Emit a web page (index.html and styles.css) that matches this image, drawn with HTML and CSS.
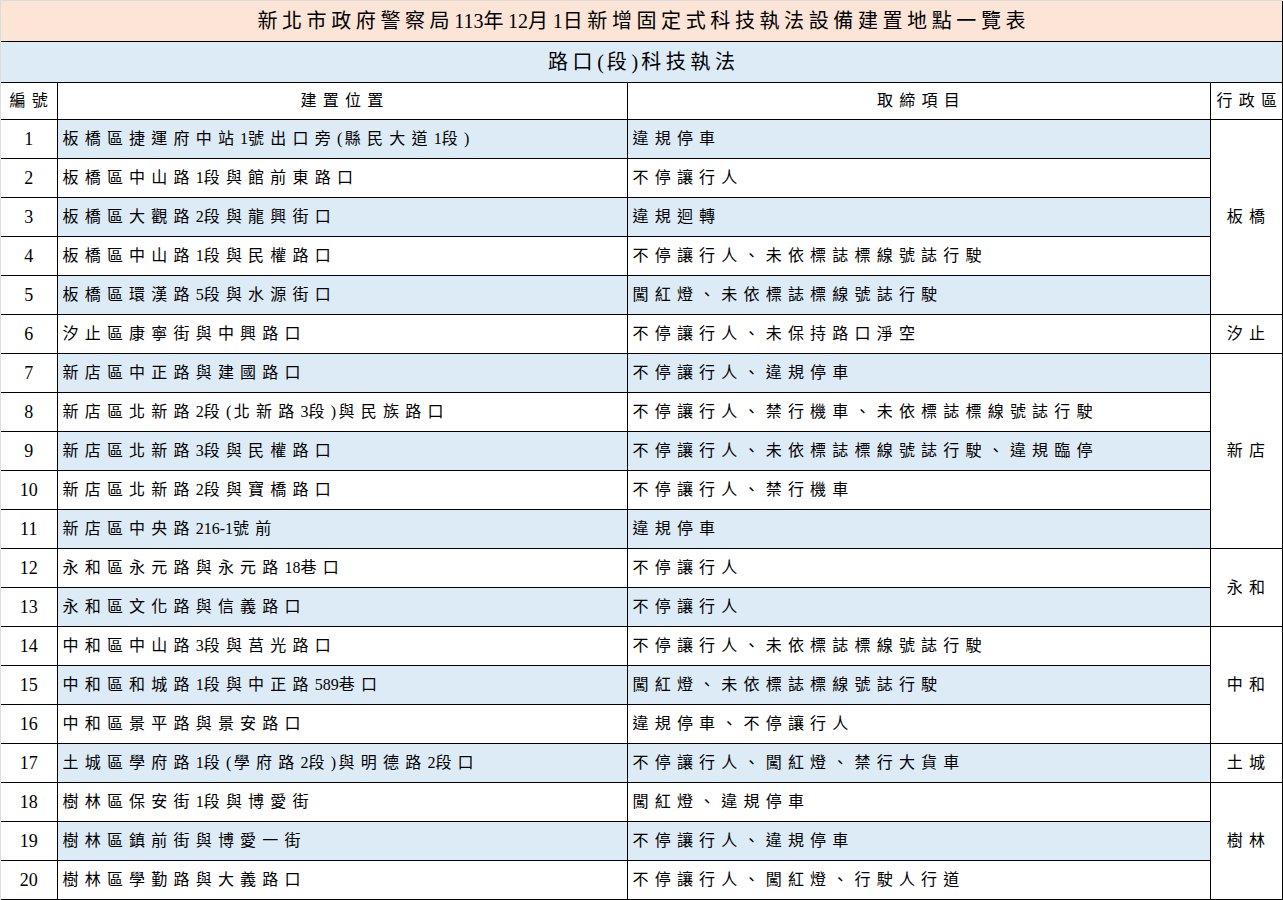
FILE: index.html
```html
<!DOCTYPE html>
<html lang="zh-Hant">
<head>
<meta charset="utf-8">
<title>新北市政府警察局113年12月1日新增固定式科技執法設備建置地點一覽表</title>
<link rel="stylesheet" href="styles.css">
</head>
<body>
<div class="sheet">
<table class="grid">
  <colgroup>
    <col class="c-no"><col class="c-loc"><col class="c-item"><col class="c-dist">
  </colgroup>
  <tr class="r-title"><td colspan="4">新北市政府警察局<span class="d">113</span>年<span class="d">12</span>月<span class="d">1</span>日新增固定式科技執法設備建置地點一覽表</td></tr>
  <tr class="r-sub"><td colspan="4">路口<span class="p">(</span>段<span class="p">)</span>科技執法</td></tr>
  <tr class="r-head">
    <td class="ctr">編號</td>
    <td class="ctr">建置位置</td>
    <td class="ctr">取締項目</td>
    <td class="ctr">行政區</td>
  </tr>
  <tr class="row odd"><td class="no">1</td><td class="txt">板橋區捷運府中站<span class="d">1</span>號出口旁<span class="p">(</span>縣民大道<span class="d">1</span>段<span class="p">)</span></td><td class="txt">違規停車</td><td class="dist" rowspan="5">板橋</td></tr>
  <tr class="row"><td class="no">2</td><td class="txt">板橋區中山路<span class="d">1</span>段與館前東路口</td><td class="txt">不停讓行人</td></tr>
  <tr class="row odd"><td class="no">3</td><td class="txt">板橋區大觀路<span class="d">2</span>段與龍興街口</td><td class="txt">違規迴轉</td></tr>
  <tr class="row"><td class="no">4</td><td class="txt">板橋區中山路<span class="d">1</span>段與民權路口</td><td class="txt">不停讓行人、未依標誌標線號誌行駛</td></tr>
  <tr class="row odd"><td class="no">5</td><td class="txt">板橋區環漢路<span class="d">5</span>段與水源街口</td><td class="txt">闖紅燈、未依標誌標線號誌行駛</td></tr>
  <tr class="row"><td class="no">6</td><td class="txt">汐止區康寧街與中興路口</td><td class="txt">不停讓行人、未保持路口淨空</td><td class="dist">汐止</td></tr>
  <tr class="row odd"><td class="no">7</td><td class="txt">新店區中正路與建國路口</td><td class="txt">不停讓行人、違規停車</td><td class="dist" rowspan="5">新店</td></tr>
  <tr class="row"><td class="no">8</td><td class="txt">新店區北新路<span class="d">2</span>段<span class="p">(</span>北新路<span class="d">3</span>段<span class="p">)</span>與民族路口</td><td class="txt">不停讓行人、禁行機車、未依標誌標線號誌行駛</td></tr>
  <tr class="row odd"><td class="no">9</td><td class="txt">新店區北新路<span class="d">3</span>段與民權路口</td><td class="txt">不停讓行人、未依標誌標線號誌行駛、違規臨停</td></tr>
  <tr class="row"><td class="no">10</td><td class="txt">新店區北新路<span class="d">2</span>段與寶橋路口</td><td class="txt">不停讓行人、禁行機車</td></tr>
  <tr class="row odd"><td class="no">11</td><td class="txt">新店區中央路<span class="d">216-1</span>號前</td><td class="txt">違規停車</td></tr>
  <tr class="row"><td class="no">12</td><td class="txt">永和區永元路與永元路<span class="d">18</span>巷口</td><td class="txt">不停讓行人</td><td class="dist" rowspan="2">永和</td></tr>
  <tr class="row odd"><td class="no">13</td><td class="txt">永和區文化路與信義路口</td><td class="txt">不停讓行人</td></tr>
  <tr class="row"><td class="no">14</td><td class="txt">中和區中山路<span class="d">3</span>段與莒光路口</td><td class="txt">不停讓行人、未依標誌標線號誌行駛</td><td class="dist" rowspan="3">中和</td></tr>
  <tr class="row odd"><td class="no">15</td><td class="txt">中和區和城路<span class="d">1</span>段與中正路<span class="d">589</span>巷口</td><td class="txt">闖紅燈、未依標誌標線號誌行駛</td></tr>
  <tr class="row"><td class="no">16</td><td class="txt">中和區景平路與景安路口</td><td class="txt">違規停車、不停讓行人</td></tr>
  <tr class="row odd"><td class="no">17</td><td class="txt">土城區學府路<span class="d">1</span>段<span class="p">(</span>學府路<span class="d">2</span>段<span class="p">)</span>與明德路<span class="d">2</span>段口</td><td class="txt">不停讓行人、闖紅燈、禁行大貨車</td><td class="dist">土城</td></tr>
  <tr class="row"><td class="no">18</td><td class="txt">樹林區保安街<span class="d">1</span>段與博愛街</td><td class="txt">闖紅燈、違規停車</td><td class="dist" rowspan="3">樹林</td></tr>
  <tr class="row odd"><td class="no">19</td><td class="txt">樹林區鎮前街與博愛一街</td><td class="txt">不停讓行人、違規停車</td></tr>
  <tr class="row"><td class="no">20</td><td class="txt">樹林區學勤路與大義路口</td><td class="txt">不停讓行人、闖紅燈、行駛人行道</td></tr>
</table>
</div>
</body>
</html>
```

FILE: styles.css
```css
html, body {
  margin: 0;
  padding: 0;
  background: #dcdcdc;
}

.sheet {
  padding: 1px 0 0 1px;
}

.grid {
  border-collapse: collapse;
  table-layout: fixed;
  width: 1281px;
  background: #ffffff;
  color: #000000;
  font-family: "Liberation Serif", "Noto Sans CJK TC", serif;
  font-size: 16px;
  letter-spacing: 6.2px;
}

.c-no { width: 56px; }
.c-loc { width: 570px; }
.c-item { width: 583px; }
.c-dist { width: 72px; }

.grid td {
  border: 1px solid #000000;
  padding: 0;
  white-space: nowrap;
  overflow: hidden;
  line-height: 20px;
}

.grid tr > td:first-child {
  border-left: none;
}

.d {
  letter-spacing: 0;
}

.p {
  letter-spacing: 2.6px;
}

.r-title td {
  height: 40px;
  background: #fce4d6;
  text-align: center;
  font-size: 20px;
  letter-spacing: 4.6px;
  padding-left: 5px;
  border-top: none;
}

.r-sub td {
  height: 40px;
  background: #ddebf7;
  text-align: center;
  font-size: 20px;
  letter-spacing: 4.6px;
  padding-left: 5px;
}

.r-sub .p {
  letter-spacing: 3px;
}

.r-head td {
  height: 36px;
  text-align: center;
  padding-left: 6px;
}

.row td {
  height: 38px;
}

.row .no {
  text-align: center;
  font-size: 18px;
  letter-spacing: 0;
}

.row .txt {
  padding-left: 5px;
}

.row.odd .txt {
  background: #ddebf7;
}

.row .dist {
  text-align: center;
  padding-left: 6px;
  background: #ffffff;
}
```
